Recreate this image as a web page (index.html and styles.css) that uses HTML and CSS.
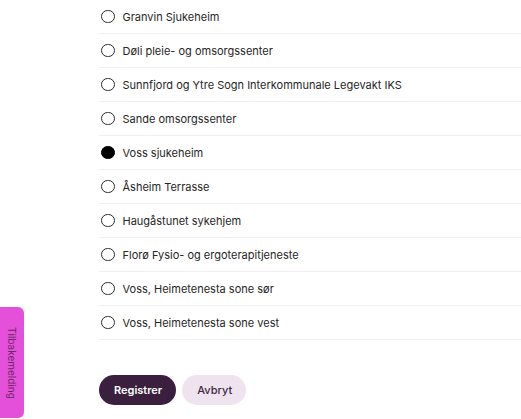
FILE: index.html
```html
<!DOCTYPE html>
<html>
<head>
<meta charset="utf-8">
<link rel="stylesheet" href="styles.css">
</head>
<body>
<main class="page">
  <ul class="options">
    <li class="option"><span class="radio"></span><span class="label">Granvin Sjukeheim</span></li>
    <li class="option"><span class="radio"></span><span class="label">Døli pleie- og omsorgssenter</span></li>
    <li class="option"><span class="radio"></span><span class="label">Sunnfjord og Ytre Sogn Interkommunale Legevakt IKS</span></li>
    <li class="option"><span class="radio"></span><span class="label">Sande omsorgssenter</span></li>
    <li class="option"><span class="radio checked"></span><span class="label">Voss sjukeheim</span></li>
    <li class="option"><span class="radio"></span><span class="label">Åsheim Terrasse</span></li>
    <li class="option"><span class="radio"></span><span class="label">Haugåstunet sykehjem</span></li>
    <li class="option"><span class="radio"></span><span class="label">Florø Fysio- og ergoterapitjeneste</span></li>
    <li class="option"><span class="radio"></span><span class="label">Voss, Heimetenesta sone sør</span></li>
    <li class="option"><span class="radio"></span><span class="label">Voss, Heimetenesta sone vest</span></li>
  </ul>
  <div class="actions">
    <button class="btn primary">Registrer</button>
    <button class="btn secondary">Avbryt</button>
  </div>
</main>
<div class="feedback">Tilbakemelding</div>
</body>
</html>
```
FILE: styles.css
```css
html, body {
  margin: 0;
  padding: 0;
  background: #fff;
  font-family: Inter, "Liberation Sans", sans-serif;
}
.page {
  padding-left: 99px;
}
.options {
  list-style: none;
  margin: 0;
  padding: 0;
}
.option {
  display: flex;
  align-items: center;
  height: 34px;
  box-sizing: border-box;
  border-bottom: 1px solid #f0eef6;
  padding-left: 2px;
}
.radio {
  width: 11.5px;
  height: 11.5px;
  border: 1.4px solid #2a2a2a;
  border-radius: 50%;
  box-sizing: content-box;
  flex: none;
}
.radio.checked {
  background: #000;
  border-color: #000;
}
.label {
  margin-left: 8px;
  font-size: 11px;
  color: #262626;
}
.actions {
  display: flex;
  gap: 6px;
  margin-top: 35px;
}
.btn {
  font-family: Inter, "Liberation Sans", sans-serif;
  font-size: 11px;
  font-weight: 600;
  height: 30px;
  border: none;
  border-radius: 15px;
  padding: 0 14px 0 15px;
}
.primary {
  background: #3b1f3e;
  color: #fff;
}
.secondary {
  background: #efe3f0;
  color: #3b2a40;
  font-weight: 500;
}
.feedback {
  position: fixed;
  left: 0;
  top: 307px;
  width: 24px;
  height: 111px;
  background: #e550da;
  border-radius: 0 6px 6px 0;
  writing-mode: vertical-rl;
  display: flex;
  align-items: center;
  justify-content: center;
  font-size: 10px;
  color: #6a2a66;
  font-family: Inter, "Liberation Sans", sans-serif;
}
```
